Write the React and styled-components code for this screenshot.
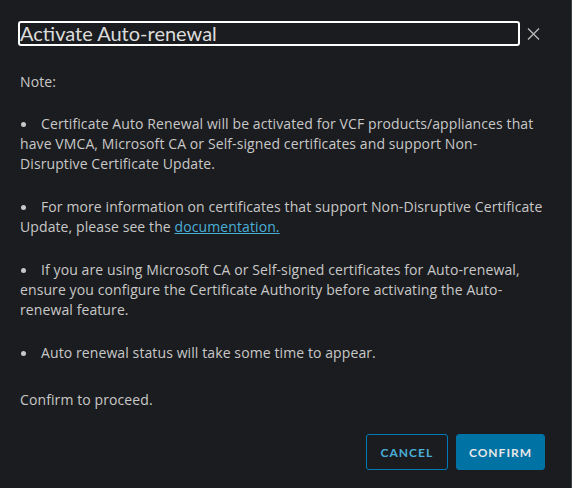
import React from 'react';
import styled, { createGlobalStyle } from 'styled-components';

const GlobalStyle = createGlobalStyle`
  html, body {
    margin: 0;
    padding: 0;
    background: #1b1c1f;
  }
  body {
    font-family: "Open Sans", "Noto Sans", sans-serif;
  }
`;

const Modal = styled.div`
  box-sizing: border-box;
  width: 572px;
  height: 488px;
  background: #1b1c1f;
  border-right: 1px solid #3a4145;
  padding: 21px 26px 0 20px;
  display: flex;
  flex-direction: column;
`;

const Header = styled.div`
  display: flex;
  align-items: center;
  gap: 6px;
  margin-left: -2px;
  padding-right: 5px;
`;

const Title = styled.h3`
  flex: 1;
  margin: 0;
  height: 25px;
  box-sizing: border-box;
  border: 2px solid #ffffff;
  border-radius: 3px;
  padding: 0;
  font-family: Lato, "Noto Sans", sans-serif;
  font-size: 20px;
  font-weight: 400;
  line-height: 21px;
  color: #dcdcdc;
`;

const CloseButton = styled.button`
  background: none;
  border: none;
  padding: 0;
  width: 14px;
  height: 16px;
  display: flex;
  align-items: center;
  justify-content: center;
  cursor: pointer;
`;

const Body = styled.div`
  margin-top: 26px;
  width: 523.5px;
  font-size: 14px;
  letter-spacing: 0.1px;
  line-height: 20px;
  color: #c8c8c8;
`;

const Paragraph = styled.p`
  margin: 0 0 22px 0;
  &:last-child {
    margin: 27px 0 0 0;
  }
`;

const Bullet = styled.p`
  margin: 0 0 23px 0;
  &::before {
    content: '';
    display: inline-block;
    width: 5px;
    height: 5px;
    border-radius: 50%;
    background: #c8c8c8;
    margin: 0 15px 2px 1px;
    vertical-align: middle;
  }
  &:nth-last-child(2) {
    margin-bottom: 0;
  }
`;

const Link = styled.a`
  color: #49afd9;
  text-decoration: underline;
`;

const Footer = styled.div`
  display: flex;
  justify-content: flex-end;
  gap: 8px;
  margin-top: 24px;
`;

const Button = styled.button`
  height: 36px;
  padding: 0 12px;
  border-radius: 3px;
  font-family: Lato, "Noto Sans", sans-serif;
  font-size: 12px;
  font-weight: 700;
  letter-spacing: 1px;
  text-transform: uppercase;
  cursor: pointer;
  border: 1px solid ${p => (p.$primary ? '#0072a3' : '#0079b8')};
  background: ${p => (p.$primary ? '#0072a3' : 'transparent')};
  color: ${p => (p.$primary ? '#e8e8e8' : '#49afd9')};
  min-width: ${p => (p.$primary ? '89px' : '82px')};
`;

const CloseIcon = () => (
  <svg width="13" height="12" viewBox="0 0 13 12">
    <path d="M1 0.5 L12 11.5 M12 0.5 L1 11.5" stroke="#b8b8b8" strokeWidth="1.4" />
  </svg>
);

export default function App() {
  return (
    <>
      <GlobalStyle />
      <Modal>
        <Header>
          <Title tabIndex={0}>Activate Auto-renewal</Title>
          <CloseButton aria-label="Close">
            <CloseIcon />
          </CloseButton>
        </Header>
        <Body>
          <Paragraph>Note:</Paragraph>
          <Bullet>
            Certificate Auto Renewal will be activated for VCF products/appliances that have
            VMCA, Microsoft CA or Self-signed certificates and support Non-Disruptive
            Certificate Update.
          </Bullet>
          <Bullet>
            For more information on certificates that support Non-Disruptive Certificate
            Update, please see the <Link href="#">documentation.</Link>
          </Bullet>
          <Bullet>
            If you are using Microsoft CA or Self-signed certificates for Auto-renewal, ensure
            you configure the Certificate Authority before activating the Auto-renewal feature.
          </Bullet>
          <Bullet>Auto renewal status will take some time to appear.</Bullet>
          <Paragraph>Confirm to proceed.</Paragraph>
        </Body>
        <Footer>
          <Button>Cancel</Button>
          <Button $primary>Confirm</Button>
        </Footer>
      </Modal>
    </>
  );
}
